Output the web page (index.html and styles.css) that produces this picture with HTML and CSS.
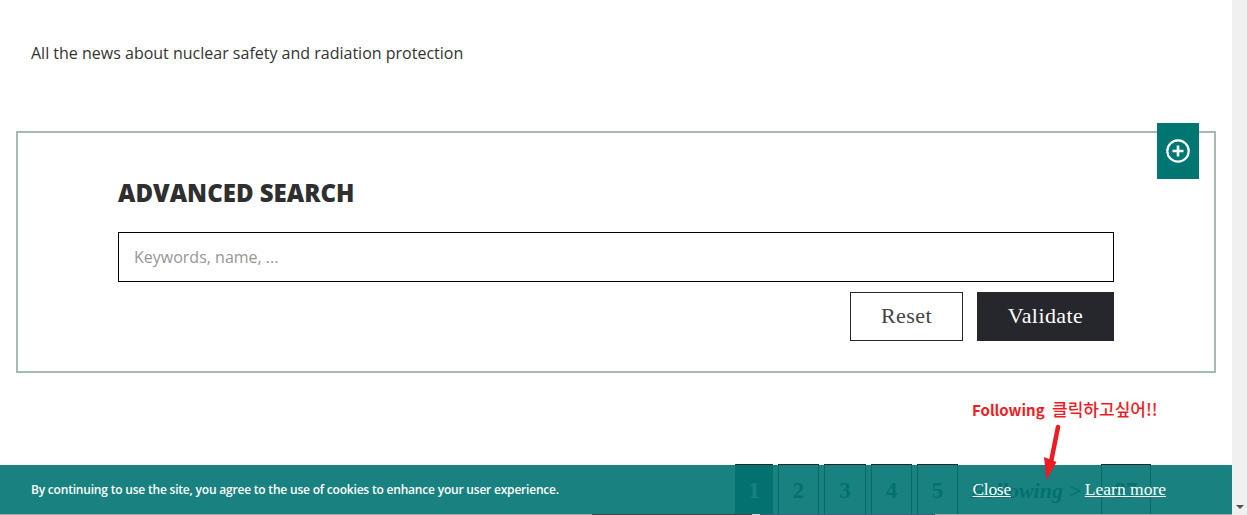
FILE: index.html
```html
<!DOCTYPE html>
<html lang="en">
<head>
<meta charset="utf-8">
<title>Advanced search</title>
<link rel="stylesheet" href="styles.css">
</head>
<body>
<div class="window">
  <main class="page">
    <p class="intro">All the news about nuclear safety and radiation protection</p>
    <section class="panel">
      <button class="toggle" type="button" aria-label="Expand">
        <svg width="26" height="26" viewBox="0 0 26 26" fill="none" stroke="#fff">
          <circle cx="13" cy="13" r="10.7" stroke-width="2.2"/>
          <path d="M13 7.5v11M7.5 13h11" stroke-width="2.6"/>
        </svg>
      </button>
      <h2 class="panel-title">ADVANCED SEARCH</h2>
      <input class="search" type="text" placeholder="Keywords, name, ...">
      <div class="actions">
        <button class="btn btn-reset" type="button">Reset</button>
        <button class="btn btn-validate" type="button">Validate</button>
      </div>
    </section>
    <nav class="pager">
      <a class="pg pg-current pg-1">1</a>
      <a class="pg">2</a>
      <a class="pg pg-wide">3</a>
      <a class="pg">4</a>
      <a class="pg">5</a>
      <a class="following">Following &gt;</a>
      <a class="pg pg-last">97</a>
    </nav>
    <div class="cookie">
      <span class="cookie-text">By continuing to use the site, you agree to the use of cookies to enhance your user experience.</span>
      <span class="cookie-links">
        <a class="cookie-link cookie-close">Close</a>
        <a class="cookie-link">Learn more</a>
      </span>
    </div>
    <div class="strip">
      <i class="seg seg-a"></i><i class="seg seg-b"></i><i class="seg seg-c"></i><i class="seg seg-d"></i><i class="seg seg-e"></i>
    </div>
    <div class="note">Following <span class="note-ko">클릭하고싶어!!</span></div>
    <svg class="arrow" width="24" height="60" viewBox="0 0 24 60">
      <path d="M17 3 L10 38" stroke="#ed1c24" stroke-width="4.5" stroke-linecap="round" fill="none"/>
      <path d="M3 33 L15.5 38 L5.5 56 Z" fill="#ed1c24"/>
    </svg>
  </main>
  <aside class="scrollbar"><span class="scroll-down"></span></aside>
</div>
</body>
</html>
```

FILE: styles.css
```css
* { box-sizing: border-box; }
html, body { margin: 0; height: 100%; overflow: hidden; background: #fff; }
.window { display: flex; width: 1247px; height: 515px; }
.page {
  position: relative;
  width: 1232px;
  height: 515px;
  overflow: hidden;
  background: #fff;
  font-family: "Open Sans", sans-serif;
}
.scrollbar {
  position: relative;
  width: 15px;
  height: 515px;
  background: #f0f0f0;
}
.scroll-down {
  position: absolute;
  left: 4px;
  bottom: 6px;
  border-left: 4px solid transparent;
  border-right: 4px solid transparent;
  border-top: 4px solid #505050;
}
.intro {
  margin: 0;
  padding: 41px 0 0 31px;
  height: 131px;
  font-size: 16px;
  line-height: 24px;
  color: #333;
}
.panel {
  position: relative;
  margin: 0 16px;
  height: 242px;
  padding: 44px 100px 30px;
  border: 2px solid #a3bdb0;
}
.toggle {
  position: absolute;
  top: -10px;
  right: 15px;
  width: 42px;
  height: 56px;
  padding: 0;
  border: 0;
  background: #007672;
  display: flex;
  align-items: center;
  justify-content: center;
}
.panel-title {
  margin: 0 0 23px;
  font-size: 24px;
  line-height: 32px;
  font-weight: 800;
  color: #2f2f2f;
}
.search {
  display: block;
  width: 100%;
  height: 50px;
  padding: 0 15px;
  border: 1px solid #000;
  border-radius: 0;
  outline: 0;
  font-family: "Open Sans", sans-serif;
  font-size: 16px;
  color: #333;
}
.search::placeholder { color: #969696; opacity: 1; }
.actions {
  display: flex;
  justify-content: flex-end;
  gap: 14px;
  margin-top: 10px;
}
.btn {
  height: 49px;
  padding: 0 0 2px;
  font-family: "Liberation Serif", serif;
  font-size: 22px;
  letter-spacing: 0.4px;
}
.btn-reset {
  width: 113px;
  background: #fff;
  border: 1px solid #26272d;
  color: #444;
}
.btn-validate {
  width: 137px;
  background: #26272d;
  border: 1px solid #26272d;
  color: #fff;
}
.pager {
  display: flex;
  gap: 5px;
  margin-top: 91px;
  padding-left: 735px;
  height: 60px;
  font-family: "Liberation Serif", serif;
}
.pg {
  width: 41px;
  height: 60px;
  padding-top: 11px;
  border: 1px solid #26272d;
  text-align: center;
  font-size: 23px;
  font-weight: 700;
  line-height: 30px;
  color: #1a4a4a;
}
.pg-1 { width: 38px; }
.pg-wide { width: 42px; }
.pg-current {
  background: #1e5654;
  border-color: #1e5654;
  border-top-color: #26272d;
  color: #fff;
}
.following {
  width: 123px;
  padding: 12px 5px 0 0;
  text-align: right;
  font-size: 22px;
  font-style: italic;
  font-weight: 700;
  line-height: 30px;
  color: #1a4a4a;
  white-space: nowrap;
}
.pg-last { width: 50px; margin-left: 10px; }
.cookie {
  position: absolute;
  left: 0;
  right: 0;
  top: 465px;
  height: 49px;
  display: flex;
  align-items: center;
  justify-content: space-between;
  padding: 0 66px 0 31px;
  background: rgba(0, 116, 114, 0.9);
  color: #fff;
}
.cookie-text { font-size: 12px; font-weight: 600; letter-spacing: -0.2px; }
.cookie-links { display: flex; gap: 74px; font-family: "Liberation Serif", serif; font-size: 17.5px; }
.cookie-link { color: #fff; text-decoration: underline; }
.cookie-close { letter-spacing: -0.3px; }
.strip {
  position: absolute;
  left: 0;
  right: 0;
  bottom: 0;
  height: 1px;
  display: flex;
}
.seg { display: block; height: 1px; }
.seg-a { width: 592px; background: #aaa; }
.seg-b { width: 160px; background: #444; }
.seg-c { width: 8px; background: #c8d4d2; }
.seg-d { width: 175px; background: #44607a; }
.seg-e { flex: 1; background: #aaa; }
.note {
  position: absolute;
  left: 972px;
  top: 399px;
  font-family: "Noto Sans CJK KR", sans-serif;
  font-size: 15px;
  line-height: 20px;
  font-weight: 700;
  color: #ed1c24;
  white-space: nowrap;
}
.note-ko { margin-left: 4px; font-size: 17px; font-weight: 500; }
.arrow {
  position: absolute;
  left: 1041px;
  top: 424px;
}
```
